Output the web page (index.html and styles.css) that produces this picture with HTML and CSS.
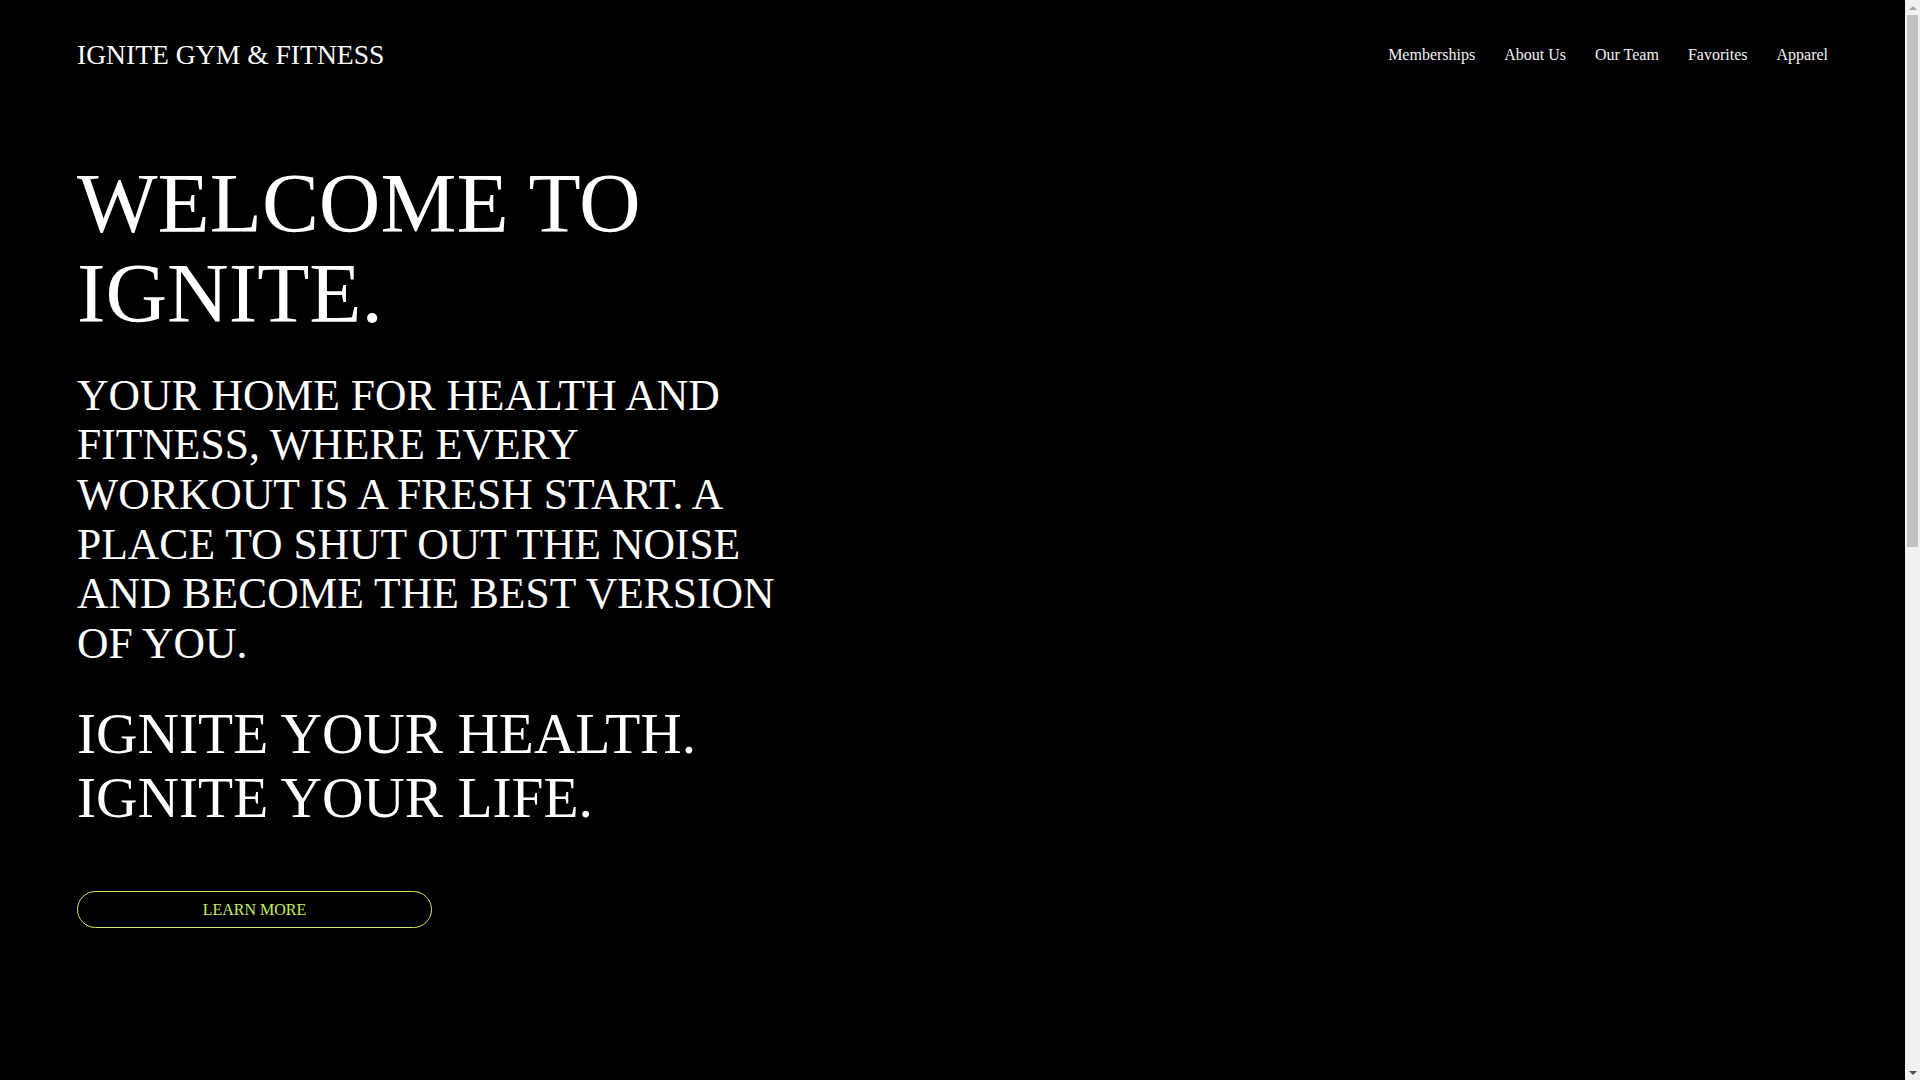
FILE: index.html
```html
<!DOCTYPE html>
<html lang="en">
<head>
<meta charset="utf-8">
<title>Ignite Gym &amp; Fitness</title>
<link rel="stylesheet" href="styles.css">
</head>
<body>
<div class="page">
  <header class="site-header">
    <a class="logo" href="#">IGNITE GYM &amp; FITNESS</a>
    <nav class="nav">
      <a href="#">Memberships</a>
      <a href="#">About Us</a>
      <a href="#">Our Team</a>
      <a href="#">Favorites</a>
      <a href="#">Apparel</a>
    </nav>
  </header>
  <main class="hero">
    <div class="hero-text">
      <h1 class="hero-title">WELCOME TO IGNITE.</h1>
      <p class="hero-lead">YOUR HOME FOR HEALTH AND FITNESS, WHERE EVERY WORKOUT IS A FRESH START. A PLACE TO SHUT OUT THE NOISE AND BECOME THE BEST VERSION OF YOU.</p>
      <p class="hero-tagline">IGNITE YOUR HEALTH.<br>IGNITE YOUR LIFE.</p>
      <a class="btn" href="#">LEARN MORE</a>
    </div>
  </main>
  <section class="below"></section>
</div>
<div class="scrollbar" aria-hidden="true">
  <span class="sb-arrow sb-up"></span>
  <span class="sb-thumb"></span>
  <span class="sb-arrow sb-down"></span>
</div>
</body>
</html>
```

FILE: styles.css
```css
html, body {
  margin: 0;
  padding: 0;
  background: #000;
}
body {
  font-family: "Liberation Serif", "Times New Roman", serif;
  color: #fff;
}
a {
  text-decoration: none;
  color: inherit;
}
.page {
  padding: 0 77px;
  margin-right: 15px;
}
.site-header {
  display: flex;
  justify-content: space-between;
  align-items: center;
  padding-top: 39px;
  height: 32px;
}
.logo {
  font-size: 27.6px;
  line-height: 32px;
  color: #fff;
}
.nav {
  display: flex;
  gap: 29px;
}
.nav a {
  font-size: 16px;
  line-height: 20px;
  color: #f2f2f2;
}
.hero {
  padding-top: 87px;
}
.hero-text {
  width: 720px;
}
.hero-title {
  margin: 0;
  font-weight: normal;
  font-size: 85.4px;
  line-height: 90px;
}
.hero-lead {
  margin: 32.6px 0 0;
  font-size: 43.6px;
  line-height: 49.7px;
}
.hero-tagline {
  margin: 33.6px 0 0;
  font-size: 57.4px;
  line-height: 63.4px;
}
.btn {
  display: flex;
  align-items: center;
  justify-content: center;
  box-sizing: border-box;
  margin-top: 62px;
  width: 355px;
  height: 37px;
  border: 1px solid #c6f061;
  border-radius: 19px;
  color: #c6f061;
  font-size: 16px;
}
.below {
  height: 1203px;
}

/* visual stand-in for the browser scrollbar seen in the reference */
.scrollbar {
  position: fixed;
  top: 0;
  right: 0;
  width: 15px;
  height: 100vh;
  background: #f1f1f1;
  display: flex;
  flex-direction: column;
  align-items: center;
}
.sb-arrow {
  width: 15px;
  height: 15px;
  display: flex;
  align-items: center;
  justify-content: center;
  flex: none;
}
.sb-arrow::before {
  content: "";
  width: 0;
  height: 0;
  border-left: 4px solid transparent;
  border-right: 4px solid transparent;
}
.sb-up::before {
  border-bottom: 4px solid #a3a3a3;
}
.sb-down {
  margin-top: auto;
}
.sb-down::before {
  border-top: 4px solid #505050;
}
.sb-thumb {
  width: 11px;
  height: 532px;
  background: #c1c1c1;
  flex: none;
}
```
